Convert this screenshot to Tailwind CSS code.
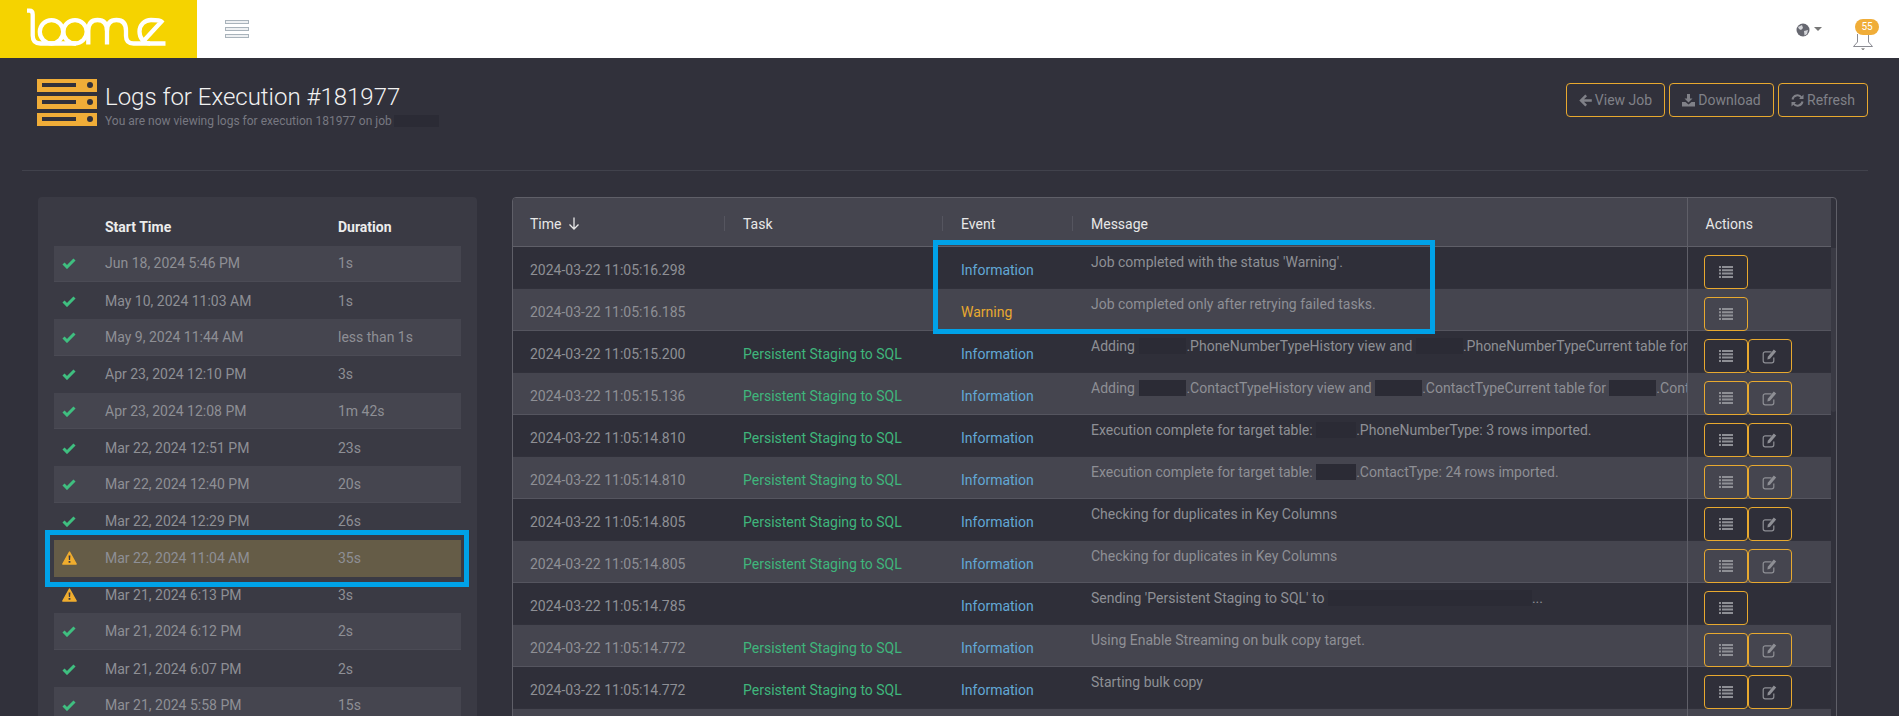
<!DOCTYPE html>
<html lang="en">
<head>
    <meta charset="utf-8" />
    <title>Logs for Execution #181977</title>
    <script src="https://cdn.jsdelivr.net/npm/@tailwindcss/browser@4"></script>
</head>
<body class="h-[716px] overflow-hidden bg-[#31313b] font-[Roboto,sans-serif] text-sm text-[#8e8f95]">
    <!-- Shared icons -->
    <svg class="hidden">
        <symbol id="ok" viewBox="0 0 14 12"><path d="M1.5 6.5 L5 10 L12.5 2.5" fill="none" stroke="#3fbf80" stroke-width="3"/></symbol>
        <symbol id="warn" viewBox="0 0 15 14"><path d="M7.5 1 L14.2 13 H0.8 Z" fill="#f0ad2e" stroke="#f0ad2e" stroke-width="1.4" stroke-linejoin="round"/><path d="M6.6 4.5 H8.4 L8.1 9 H6.9 Z M6.6 10 H8.4 V11.8 H6.6 Z" fill="#3a3a44"/></symbol>
        <symbol id="list" viewBox="0 0 14 12"><path d="M0 0H2V2H0Z M3 0H14V2H3Z M0 3.3H2V5.3H0Z M3 3.3H14V5.3H3Z M0 6.6H2V8.6H0Z M3 6.6H14V8.6H3Z M0 9.9H2V11.9H0Z M3 9.9H14V11.9H3Z" fill="#8e8f95"/></symbol>
        <symbol id="edit" viewBox="0 0 15 16"><path d="M9.5 3.8H3.2A2 2 0 0 0 1.2 5.8V12.8A2 2 0 0 0 3.2 14.8H9.8A2 2 0 0 0 11.8 12.8V9.5" fill="none" stroke="#8e8f95" stroke-width="1.2"/><path d="M5.8 8.8 L11.8 1.6 L14.2 3.6 L8 10.8 L5.4 11.4 Z" fill="#8e8f95"/></symbol>
    </svg>

    <!-- Top bar -->
    <header class="flex h-[58px] items-center bg-white">
        <div class="flex h-full w-[197px] shrink-0 bg-[#f5d300]">
            <svg width="197" height="58" fill="none" stroke="#fff" stroke-width="4.3">
                <path d="M27 10.7H29.5Q32.7 10.7 32.7 14.5V35.5Q32.7 43.5 40.5 43.5H76"/>
                <ellipse cx="51.5" cy="31.8" rx="11.7" ry="11.7"/>
                <ellipse cx="75" cy="31.8" rx="11.7" ry="11.7"/>
                <path d="M88.3 44.5V30.7Q88.3 20 97.5 20Q107 20 107 30.7V44.5"/>
                <path d="M107 30.7Q107 20 116.5 20Q126 20 126 30.7V36Q126 43.5 133.5 43.5H165.5"/>
                <path d="M150 43.5C143.5 43.5 139.5 38 139.5 31.5C139.5 25 144.5 20 151 20C156 20 160 20 161.5 21.5L144 40.5"/>
            </svg>
        </div>
        <!-- Menu toggle -->
        <div class="ml-[28px] flex w-6 flex-col gap-[2.5px]">
            <span class="h-[4.5px] border border-[#a9b3bb] bg-[#eef0f2]"></span>
            <span class="h-[4.5px] border border-[#a9b3bb] bg-[#eef0f2]"></span>
            <span class="h-[4.5px] border border-[#a9b3bb] bg-[#eef0f2]"></span>
        </div>
        <div class="ml-auto mr-[20px] flex items-center">
            <svg width="14" height="14" viewBox="0 0 14 14" class="mt-px"><circle cx="7" cy="7" r="6.5" fill="#666770"/><path d="M2 4 L6 2 L7 5 L5 7 L3 6 Z M8 8 L12 7 L11 11 L8.5 12.5 Z" fill="#d5d6da"/></svg>
            <span class="ml-[4px] h-0 w-0 border-x-[4px] border-t-[4px] border-x-transparent border-t-[#777]"></span>
            <!-- Bell -->
            <div class="relative ml-[31px] h-[40px] w-[26px]">
                <svg width="20" height="16" viewBox="0 0 20 16" class="absolute left-0 top-[25px]" fill="none" stroke="#8a8b92"><path d="M4.5 0V8L0.5 12.5H19.5L15.5 8V0"/><path d="M8 14.5H12L10 16Z" fill="#555" stroke="none"/></svg>
                <span class="absolute left-[2px] top-[10px] flex h-4 w-6 items-center justify-center rounded-full bg-[#f0ad38] text-[10px] text-white">55</span>
            </div>
        </div>
    </header>

    <!-- Page heading -->
    <div class="ml-[22px] mr-[31px] flex h-[113px] justify-between border-b border-[#41424c] pl-[15px]">
        <div class="flex pt-[21px]">
            <svg width="60" height="47" viewBox="0 0 60 47">
                <g fill="#f0ad38"><rect width="60" height="13"/><rect y="17" width="60" height="13"/><rect y="34" width="60" height="13"/></g>
                <g fill="#31313b"><rect x="5" y="4" width="34" height="4"/><rect x="5" y="21" width="34" height="4"/><rect x="5" y="38" width="34" height="4"/><circle cx="53" cy="6" r="3"/><circle cx="53" cy="23" r="3"/><circle cx="53" cy="40" r="3"/></g>
            </svg>
            <div class="ml-2">
                <h1 class="mt-[4px] text-[24px] font-light leading-[28px] text-[#f2f2f2]">Logs for Execution #181977</h1>
                <p class="mt-[3px] flex items-center text-xs leading-[14px] text-[#777881]">You are now viewing logs for execution 181977 on job<span class="ml-[2px] h-3 w-[45px] bg-[#2b2b35]"></span></p>
            </div>
        </div>
        <div class="flex gap-[4px] pt-[25px]">
            <button class="flex h-[34px] w-[99px] items-center justify-center gap-[3px] rounded border border-[#e8a92f] text-[#808188]">
                <svg width="13" height="13" viewBox="0 0 13 13" fill="#808188"><path d="M6.3 0.5 L8 2.2 L5 5.2 H12.8 V7.8 H5 L8 10.8 L6.3 12.5 L0.3 6.5 Z"/></svg>View Job
            </button>
            <button class="flex h-[34px] w-[105px] items-center justify-center gap-[3px] rounded border border-[#e8a92f] text-[#808188]">
                <svg width="13" height="13" viewBox="0 0 13 13" fill="#808188"><path d="M5 0H8V4.5H10.5L6.5 8.5L2.5 4.5H5Z M0 8H3.5L6.5 10.5L9.5 8H13V12.5H0Z"/></svg>Download
            </button>
            <button class="flex h-[34px] w-[90px] items-center justify-center gap-[3px] rounded border border-[#e8a92f] text-[#808188]">
                <svg width="13" height="13" viewBox="0 0 13 13" fill="none" stroke="#808188" stroke-width="2"><path d="M1.5 5.5A5 5 0 0 1 10.5 3.5"/><path d="M11.5 7.5A5 5 0 0 1 2.5 9.5"/><path d="M12.5 0.5V5H8Z M0.5 12.5V8H5Z" fill="#808188" stroke="none"/></svg>Refresh
            </button>
        </div>
    </div>

    <main class="flex gap-[35px] pl-[38px] pt-[26px]">
        <!-- Executions list -->
        <section class="relative h-[600px] w-[439px] shrink-0 rounded-t bg-[#3a3a44] px-4">
            <div class="flex h-[48.5px] items-end pb-[11px] font-bold leading-4 text-[#ececec]">
                <span class="ml-[51px] w-[233px]">Start Time</span><span>Duration</span>
            </div>
            <div class="flex h-[36.8px] items-center border-b border-[#4b4b55] bg-[#45454f]"><svg class="ml-[8px] h-3 w-[14px]"><use href="#ok"/></svg><span class="ml-[29px] w-[233px]">Jun 18, 2024 5:46 PM</span><span>1s</span></div>
            <div class="flex h-[36.8px] items-center"><svg class="ml-[8px] h-3 w-[14px]"><use href="#ok"/></svg><span class="ml-[29px] w-[233px]">May 10, 2024 11:03 AM</span><span>1s</span></div>
            <div class="flex h-[36.8px] items-center border-b border-[#4b4b55] bg-[#45454f]"><svg class="ml-[8px] h-3 w-[14px]"><use href="#ok"/></svg><span class="ml-[29px] w-[233px]">May 9, 2024 11:44 AM</span><span>less than 1s</span></div>
            <div class="flex h-[36.8px] items-center"><svg class="ml-[8px] h-3 w-[14px]"><use href="#ok"/></svg><span class="ml-[29px] w-[233px]">Apr 23, 2024 12:10 PM</span><span>3s</span></div>
            <div class="flex h-[36.8px] items-center border-b border-[#4b4b55] bg-[#45454f]"><svg class="ml-[8px] h-3 w-[14px]"><use href="#ok"/></svg><span class="ml-[29px] w-[233px]">Apr 23, 2024 12:08 PM</span><span>1m 42s</span></div>
            <div class="flex h-[36.8px] items-center"><svg class="ml-[8px] h-3 w-[14px]"><use href="#ok"/></svg><span class="ml-[29px] w-[233px]">Mar 22, 2024 12:51 PM</span><span>23s</span></div>
            <div class="flex h-[36.8px] items-center border-b border-[#4b4b55] bg-[#45454f]"><svg class="ml-[8px] h-3 w-[14px]"><use href="#ok"/></svg><span class="ml-[29px] w-[233px]">Mar 22, 2024 12:40 PM</span><span>20s</span></div>
            <div class="flex h-[36.8px] items-center"><svg class="ml-[8px] h-3 w-[14px]"><use href="#ok"/></svg><span class="ml-[29px] w-[233px]">Mar 22, 2024 12:29 PM</span><span>26s</span></div>
            <div class="flex h-[36.8px] items-center bg-[#655c47]"><svg class="ml-[8px] h-[14px] w-[15px]"><use href="#warn"/></svg><span class="ml-[28px] w-[233px]">Mar 22, 2024 11:04 AM</span><span>35s</span></div>
            <div class="flex h-[36.8px] items-center"><svg class="ml-[8px] h-[14px] w-[15px]"><use href="#warn"/></svg><span class="ml-[28px] w-[233px]">Mar 21, 2024 6:13 PM</span><span>3s</span></div>
            <div class="flex h-[36.8px] items-center border-b border-[#4b4b55] bg-[#45454f]"><svg class="ml-[8px] h-3 w-[14px]"><use href="#ok"/></svg><span class="ml-[29px] w-[233px]">Mar 21, 2024 6:12 PM</span><span>2s</span></div>
            <div class="flex h-[36.8px] items-center"><svg class="ml-[8px] h-3 w-[14px]"><use href="#ok"/></svg><span class="ml-[29px] w-[233px]">Mar 21, 2024 6:07 PM</span><span>2s</span></div>
            <div class="flex h-[36.8px] items-center border-b border-[#4b4b55] bg-[#45454f]"><svg class="ml-[8px] h-3 w-[14px]"><use href="#ok"/></svg><span class="ml-[29px] w-[233px]">Mar 21, 2024 5:58 PM</span><span>15s</span></div>
            <!-- Highlight annotation -->
            <div class="absolute left-[7px] top-[333px] h-[57px] w-[424px] border-[5px] border-[#00a2e8]"></div>
        </section>

        <!-- Log table -->
        <section class="relative h-[600px] w-[1325px] shrink-0 overflow-hidden rounded-t border border-[#5f5f68]">
            <table class="w-[1318px] table-fixed border-collapse">
                <colgroup><col class="w-[212px]"><col class="w-[218px]"><col class="w-[130px]"><col class="w-[614px]"><col class="w-[144px]"></colgroup>
                <thead class="bg-[#45454f] text-left font-normal text-[#e8e8e8]">
                    <tr class="h-[48px] border-b border-[#5f5f68]">
                        <th class="pl-[17px] pt-1 font-normal"><span class="flex items-center justify-between">Time<svg class="ml-[7px] mr-auto" width="12" height="13" viewBox="0 0 12 13" fill="none" stroke="#e8e8e8" stroke-width="1.3"><path d="M6 0.5V12M1.5 7.5L6 12L10.5 7.5"/></svg><span class="h-[15px] w-px bg-[#55555f]"></span></span></th>
                        <th class="pl-[18px] pt-1 font-normal"><span class="flex items-center justify-between">Task<span class="h-[15px] w-px bg-[#55555f]"></span></span></th>
                        <th class="pl-[18px] pt-1 font-normal"><span class="flex items-center justify-between">Event<span class="h-[15px] w-px bg-[#55555f]"></span></span></th>
                        <th class="pl-[18px] pt-1 font-normal">Message</th>
                        <th class="border-l border-[#5f5f68] pl-[18px] pt-1 font-normal">Actions</th>
                    </tr>
                </thead>
                <tbody>
                    <tr class="h-[42px] border-b border-[#31313b] bg-[#2f2f39]">
                        <td class="pl-[17px] pt-[6px]">2024-03-22 11:05:16.298</td><td class="pl-[18px] pt-[6px] text-[#3fb67c]"></td><td class="pl-[18px] pt-[6px] text-[#62a8d6]">Information</td>
                        <td class="overflow-hidden whitespace-nowrap pb-[10px] pl-[18px]">Job completed with the status 'Warning'.</td>
                        <td class="border-l border-[#5f5f68] pl-[16px] pt-[8px] align-top"><div class="-mb-[2px] flex"><button class="flex h-[34px] w-11 items-center justify-center rounded border border-[#e8a92f]"><svg class="h-3 w-[14px]"><use href="#list"/></svg></button></div></td>
                    </tr>
                    <tr class="h-[42px] border-b border-[#55555f] bg-[#45454f]">
                        <td class="pl-[17px] pt-[6px]">2024-03-22 11:05:16.185</td><td class="pl-[18px] pt-[6px] text-[#3fb67c]"></td><td class="pl-[18px] pt-[6px] text-[#e8a92f]">Warning</td>
                        <td class="overflow-hidden whitespace-nowrap pb-[10px] pl-[18px]">Job completed only after retrying failed tasks.</td>
                        <td class="border-l border-[#5f5f68] pl-[16px] pt-[8px] align-top"><div class="-mb-[2px] flex"><button class="flex h-[34px] w-11 items-center justify-center rounded border border-[#e8a92f]"><svg class="h-3 w-[14px]"><use href="#list"/></svg></button></div></td>
                    </tr>
                    <tr class="h-[42px] border-b border-[#31313b] bg-[#2f2f39]">
                        <td class="pl-[17px] pt-[6px]">2024-03-22 11:05:15.200</td><td class="pl-[18px] pt-[6px] text-[#3fb67c]">Persistent Staging to SQL</td><td class="pl-[18px] pt-[6px] text-[#62a8d6]">Information</td>
                        <td class="overflow-hidden whitespace-nowrap pb-[10px] pl-[18px]">Adding <span class="ml-px inline-block h-4 w-[47px] bg-[#2b2b35] align-[-3px]"></span>.PhoneNumberTypeHistory view and <span class="inline-block h-4 w-[47px] bg-[#2b2b35] align-[-3px]"></span>.PhoneNumberTypeCurrent table for <span class="inline-block h-4 w-[47px] bg-[#2b2b35] align-[-3px]"></span></td>
                        <td class="border-l border-[#5f5f68] pl-[16px] pt-[8px] align-top"><div class="-mb-[2px] flex"><button class="flex h-[34px] w-11 items-center justify-center rounded border border-[#e8a92f]"><svg class="h-3 w-[14px]"><use href="#list"/></svg></button><button class="flex h-[34px] w-11 items-center justify-center rounded border border-[#e8a92f]"><svg class="h-4 w-[15px]"><use href="#edit"/></svg></button></div></td>
                    </tr>
                    <tr class="h-[42px] border-b border-[#55555f] bg-[#45454f]">
                        <td class="pl-[17px] pt-[6px]">2024-03-22 11:05:15.136</td><td class="pl-[18px] pt-[6px] text-[#3fb67c]">Persistent Staging to SQL</td><td class="pl-[18px] pt-[6px] text-[#62a8d6]">Information</td>
                        <td class="overflow-hidden whitespace-nowrap pb-[10px] pl-[18px]">Adding <span class="ml-px inline-block h-4 w-[47px] bg-[#2b2b35] align-[-3px]"></span>.ContactTypeHistory view and <span class="inline-block h-4 w-[47px] bg-[#2b2b35] align-[-3px]"></span>.ContactTypeCurrent table for <span class="inline-block h-4 w-[47px] bg-[#2b2b35] align-[-3px]"></span>.ContactType</td>
                        <td class="border-l border-[#5f5f68] pl-[16px] pt-[8px] align-top"><div class="-mb-[2px] flex"><button class="flex h-[34px] w-11 items-center justify-center rounded border border-[#e8a92f]"><svg class="h-3 w-[14px]"><use href="#list"/></svg></button><button class="flex h-[34px] w-11 items-center justify-center rounded border border-[#e8a92f]"><svg class="h-4 w-[15px]"><use href="#edit"/></svg></button></div></td>
                    </tr>
                    <tr class="h-[42px] border-b border-[#31313b] bg-[#2f2f39]">
                        <td class="pl-[17px] pt-[6px]">2024-03-22 11:05:14.810</td><td class="pl-[18px] pt-[6px] text-[#3fb67c]">Persistent Staging to SQL</td><td class="pl-[18px] pt-[6px] text-[#62a8d6]">Information</td>
                        <td class="overflow-hidden whitespace-nowrap pb-[10px] pl-[18px]">Execution complete for target table: <span class="inline-block h-4 w-10 bg-[#2b2b35] align-[-3px]"></span>.PhoneNumberType: 3 rows imported.</td>
                        <td class="border-l border-[#5f5f68] pl-[16px] pt-[8px] align-top"><div class="-mb-[2px] flex"><button class="flex h-[34px] w-11 items-center justify-center rounded border border-[#e8a92f]"><svg class="h-3 w-[14px]"><use href="#list"/></svg></button><button class="flex h-[34px] w-11 items-center justify-center rounded border border-[#e8a92f]"><svg class="h-4 w-[15px]"><use href="#edit"/></svg></button></div></td>
                    </tr>
                    <tr class="h-[42px] border-b border-[#55555f] bg-[#45454f]">
                        <td class="pl-[17px] pt-[6px]">2024-03-22 11:05:14.810</td><td class="pl-[18px] pt-[6px] text-[#3fb67c]">Persistent Staging to SQL</td><td class="pl-[18px] pt-[6px] text-[#62a8d6]">Information</td>
                        <td class="overflow-hidden whitespace-nowrap pb-[10px] pl-[18px]">Execution complete for target table: <span class="inline-block h-4 w-10 bg-[#2b2b35] align-[-3px]"></span>.ContactType: 24 rows imported.</td>
                        <td class="border-l border-[#5f5f68] pl-[16px] pt-[8px] align-top"><div class="-mb-[2px] flex"><button class="flex h-[34px] w-11 items-center justify-center rounded border border-[#e8a92f]"><svg class="h-3 w-[14px]"><use href="#list"/></svg></button><button class="flex h-[34px] w-11 items-center justify-center rounded border border-[#e8a92f]"><svg class="h-4 w-[15px]"><use href="#edit"/></svg></button></div></td>
                    </tr>
                    <tr class="h-[42px] border-b border-[#31313b] bg-[#2f2f39]">
                        <td class="pl-[17px] pt-[6px]">2024-03-22 11:05:14.805</td><td class="pl-[18px] pt-[6px] text-[#3fb67c]">Persistent Staging to SQL</td><td class="pl-[18px] pt-[6px] text-[#62a8d6]">Information</td>
                        <td class="overflow-hidden whitespace-nowrap pb-[10px] pl-[18px]">Checking for duplicates in Key Columns</td>
                        <td class="border-l border-[#5f5f68] pl-[16px] pt-[8px] align-top"><div class="-mb-[2px] flex"><button class="flex h-[34px] w-11 items-center justify-center rounded border border-[#e8a92f]"><svg class="h-3 w-[14px]"><use href="#list"/></svg></button><button class="flex h-[34px] w-11 items-center justify-center rounded border border-[#e8a92f]"><svg class="h-4 w-[15px]"><use href="#edit"/></svg></button></div></td>
                    </tr>
                    <tr class="h-[42px] border-b border-[#55555f] bg-[#45454f]">
                        <td class="pl-[17px] pt-[6px]">2024-03-22 11:05:14.805</td><td class="pl-[18px] pt-[6px] text-[#3fb67c]">Persistent Staging to SQL</td><td class="pl-[18px] pt-[6px] text-[#62a8d6]">Information</td>
                        <td class="overflow-hidden whitespace-nowrap pb-[10px] pl-[18px]">Checking for duplicates in Key Columns</td>
                        <td class="border-l border-[#5f5f68] pl-[16px] pt-[8px] align-top"><div class="-mb-[2px] flex"><button class="flex h-[34px] w-11 items-center justify-center rounded border border-[#e8a92f]"><svg class="h-3 w-[14px]"><use href="#list"/></svg></button><button class="flex h-[34px] w-11 items-center justify-center rounded border border-[#e8a92f]"><svg class="h-4 w-[15px]"><use href="#edit"/></svg></button></div></td>
                    </tr>
                    <tr class="h-[42px] border-b border-[#31313b] bg-[#2f2f39]">
                        <td class="pl-[17px] pt-[6px]">2024-03-22 11:05:14.785</td><td class="pl-[18px] pt-[6px] text-[#3fb67c]"></td><td class="pl-[18px] pt-[6px] text-[#62a8d6]">Information</td>
                        <td class="overflow-hidden whitespace-nowrap pb-[10px] pl-[18px]">Sending 'Persistent Staging to SQL' to <span class="inline-block h-4 w-[204px] bg-[#2b2b35] align-[-3px]"></span>...</td>
                        <td class="border-l border-[#5f5f68] pl-[16px] pt-[8px] align-top"><div class="-mb-[2px] flex"><button class="flex h-[34px] w-11 items-center justify-center rounded border border-[#e8a92f]"><svg class="h-3 w-[14px]"><use href="#list"/></svg></button></div></td>
                    </tr>
                    <tr class="h-[42px] border-b border-[#55555f] bg-[#45454f]">
                        <td class="pl-[17px] pt-[6px]">2024-03-22 11:05:14.772</td><td class="pl-[18px] pt-[6px] text-[#3fb67c]">Persistent Staging to SQL</td><td class="pl-[18px] pt-[6px] text-[#62a8d6]">Information</td>
                        <td class="overflow-hidden whitespace-nowrap pb-[10px] pl-[18px]">Using Enable Streaming on bulk copy target.</td>
                        <td class="border-l border-[#5f5f68] pl-[16px] pt-[8px] align-top"><div class="-mb-[2px] flex"><button class="flex h-[34px] w-11 items-center justify-center rounded border border-[#e8a92f]"><svg class="h-3 w-[14px]"><use href="#list"/></svg></button><button class="flex h-[34px] w-11 items-center justify-center rounded border border-[#e8a92f]"><svg class="h-4 w-[15px]"><use href="#edit"/></svg></button></div></td>
                    </tr>
                    <tr class="h-[42px] border-b border-[#31313b] bg-[#2f2f39]">
                        <td class="pl-[17px] pt-[6px]">2024-03-22 11:05:14.772</td><td class="pl-[18px] pt-[6px] text-[#3fb67c]">Persistent Staging to SQL</td><td class="pl-[18px] pt-[6px] text-[#62a8d6]">Information</td>
                        <td class="overflow-hidden whitespace-nowrap pb-[10px] pl-[18px]">Starting bulk copy</td>
                        <td class="border-l border-[#5f5f68] pl-[16px] pt-[8px] align-top"><div class="-mb-[2px] flex"><button class="flex h-[34px] w-11 items-center justify-center rounded border border-[#e8a92f]"><svg class="h-3 w-[14px]"><use href="#list"/></svg></button><button class="flex h-[34px] w-11 items-center justify-center rounded border border-[#e8a92f]"><svg class="h-4 w-[15px]"><use href="#edit"/></svg></button></div></td>
                    </tr>
                    <tr class="h-[42px] bg-[#45454f]"><td colspan="4"></td><td class="border-l border-[#5f5f68]"></td></tr>
                </tbody>
            </table>
            <!-- Scrollbar thumb -->
            <div class="absolute right-0 top-[50px] h-[164px] w-[5px] rounded-b bg-[#3a3a44]"></div>
            <!-- Highlight annotation -->
            <div class="absolute left-[420px] top-[42px] h-[94px] w-[502px] border-[5px] border-[#00a2e8]"></div>
        </section>
    </main>
</body>
</html>
